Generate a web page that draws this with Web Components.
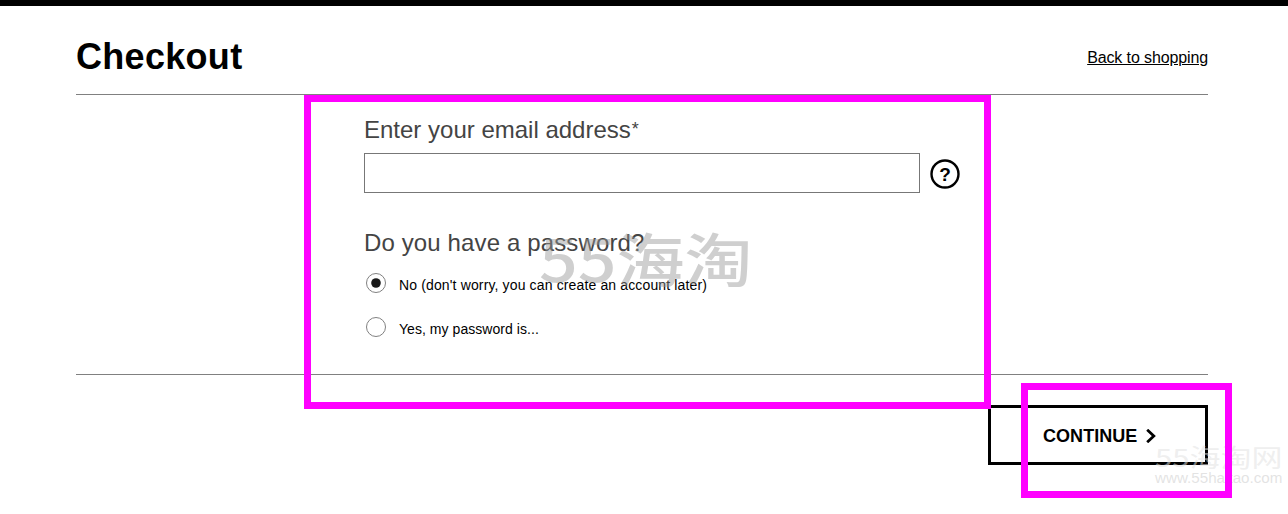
<!DOCTYPE html>
<html lang="en"><head><meta charset="utf-8"><title>Checkout</title>
<style>
html,body{margin:0;padding:0;background:#fff}
body{font-family:"Liberation Sans",Arial,sans-serif;width:1288px;height:514px;overflow:hidden;position:relative}
</style></head><body>
<template id="t-page"><style>
:host{display:block;border-top:6px solid #000;padding:0 80px 0 76px;color:#000}
.main{display:flex;justify-content:center;height:279px;border-bottom:1px solid #808080}
.foot{display:flex;justify-content:flex-end;padding-top:30px}
</style>
<slot name="head"></slot>
<div class="main"><slot></slot></div>
<div class="foot"><slot name="foot"></slot></div>
</template>

<template id="t-head"><style>
:host{display:flex;justify-content:space-between;align-items:flex-start;height:89px;box-sizing:border-box;border-bottom:1px solid #808080}
h1{margin:29px 0 0;font:bold 36px/44px "Liberation Sans",Arial,sans-serif;color:#000;letter-spacing:.3px}
a{margin-top:42px;font:16px/20px "Liberation Sans",Arial,sans-serif;color:#000;text-decoration:underline;letter-spacing:-.12px}
</style><h1>Checkout</h1><a href="#"><slot></slot></a></template>

<template id="t-form"><style>
:host{display:block;width:596px;margin-left:40px;padding-top:21px;box-sizing:border-box}
.lab{font:24px/28px "Liberation Sans",Arial,sans-serif;color:#444}
.ast{font-size:18px;line-height:0;vertical-align:3px;margin-left:1px}
.row{display:flex;align-items:center;gap:10px;margin-top:9px;height:40px}
.inp{width:556px;height:40px;box-sizing:border-box;border:1px solid #777;background:#fff;display:block;padding:0;margin:0}
svg{display:block;flex:none;position:relative;top:1px}
.q{margin-top:36px;margin-bottom:6px;letter-spacing:.13px}
</style>
<div class="lab">Enter your email address<span class="ast">*</span></div>
<div class="row"><input class="inp" type="text" aria-label="Email address">
<svg width="30" height="30" viewBox="0 0 30 30"><circle cx="15" cy="15" r="13.5" fill="#fff" stroke="#000" stroke-width="2.4"/><text x="15" y="21.5" text-anchor="middle" font-family="Liberation Sans" font-weight="700" font-size="19" fill="#000">?</text></svg></div>
<div class="lab q">Do you have a password?</div>
<slot></slot></template>

<template id="t-radio"><style>
:host{display:flex;align-items:center;height:44px;padding-left:2px;font:14px/16px "Liberation Sans",Arial,sans-serif;color:#000;letter-spacing:.14px}
svg{display:block;flex:none;margin-right:13px;position:relative;top:-2px}
</style>
<svg width="20" height="20" viewBox="0 0 20 20"><circle cx="10" cy="10" r="9.5" fill="#fff" stroke="#808080" stroke-width="1"/><circle class="dot" cx="10" cy="10" r="4.8" fill="#1a1a1a"/></svg>
<span><slot></slot></span></template>

<template id="t-btn"><style>
:host{display:block}
button{display:flex;align-items:center;width:220px;height:60px;box-sizing:border-box;border:3px solid #000;background:#fff;padding:2px 0 0 52px;margin:0;font:bold 18px/20px "Liberation Sans",Arial,sans-serif;color:#000;letter-spacing:.05px}
svg{display:block;margin-left:8px}
</style><button><slot></slot><svg width="12" height="14" viewBox="0 0 12 14"><path d="M2.2 .8 8.8 7 2.2 13.2" fill="none" stroke="#000" stroke-width="2.8"/></svg></button></template>

<template id="t-overlay"><style>
:host{position:absolute;inset:0;display:block;pointer-events:none;overflow:hidden}
.mark{position:absolute;box-sizing:border-box;border:7px solid #f0f}
.a{left:304px;top:95px;width:687px;height:314px}
.b{left:1021px;top:383px;width:211px;height:115px}
.wm{position:absolute;left:539px;top:221px;font:500 68px/72px "Noto Sans CJK SC","Liberation Sans",sans-serif;color:rgba(150,150,150,.46);white-space:nowrap;transform:scaleY(.85)}
.wm2{position:absolute;left:1155px;top:439px;font:31px/36px "Noto Sans CJK SC","Liberation Sans",sans-serif;color:rgba(225,225,225,.55);white-space:nowrap;transform:scaleY(.8)}
.wm3{position:absolute;left:1155px;top:469px;font:15.2px/18px "Liberation Sans",sans-serif;color:rgba(215,215,215,.7);white-space:nowrap}
</style>
<div class="wm">55海淘</div><div class="wm2">55海淘网</div><div class="wm3">www.55haitao.com</div>
<div class="mark a"></div><div class="mark b"></div></template>

<x-page>
  <x-head slot="head">Back to shopping</x-head>
  <x-form>
    <x-radio checked>No (don't worry, you can create an account later)</x-radio>
    <x-radio style="letter-spacing:.05px">Yes, my password is...</x-radio>
  </x-form>
  <x-btn slot="foot">CONTINUE</x-btn>
</x-page>
<x-overlay></x-overlay>
<script>
for (const n of ['page','head','form','radio','btn','overlay']) {
  customElements.define('x-'+n, class extends HTMLElement {
    constructor(){super();const r=this.attachShadow({mode:'open'});r.appendChild(document.getElementById('t-'+n).content.cloneNode(true));}
    connectedCallback(){ if(n==='radio'&&!this.hasAttribute('checked')) this.shadowRoot.querySelector('.dot').remove(); }
  });
}
</script>
</body></html>
